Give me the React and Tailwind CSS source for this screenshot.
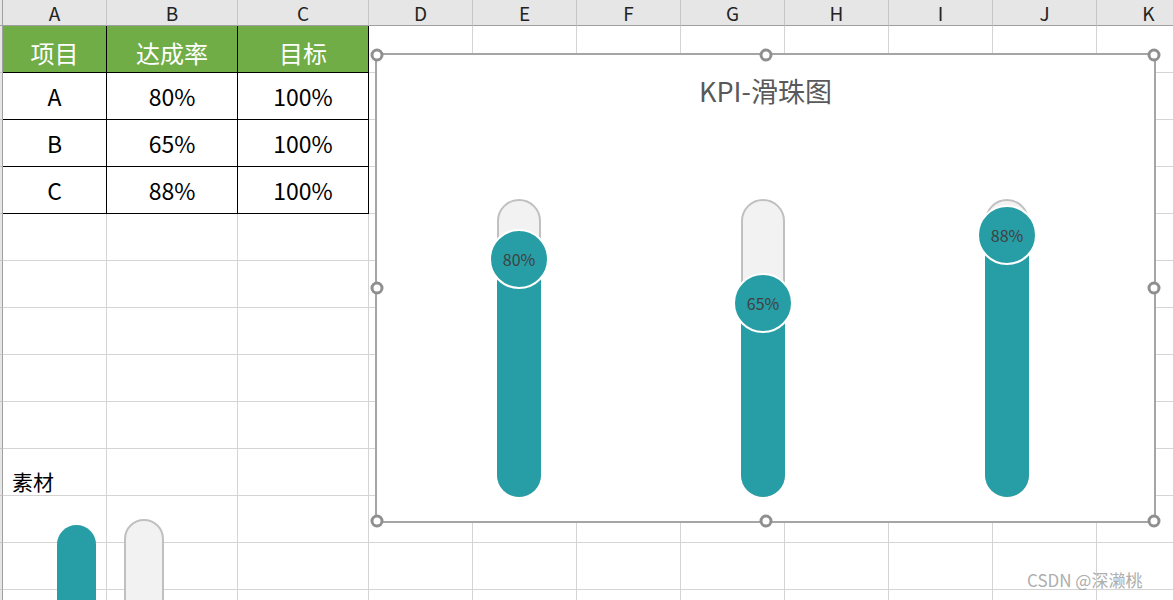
import React from "react"

const letters = ["A", "B", "C", "D", "E", "F", "G", "H", "I", "J", "K"]

const table = [
  ["项目", "达成率", "目标"],
  ["A", "80%", "100%"],
  ["B", "65%", "100%"],
  ["C", "88%", "100%"],
]

const sliders = [
  { label: "80%", value: 0.8 },
  { label: "65%", value: 0.65 },
  { label: "88%", value: 0.88 },
]

const TRACK_H = 298

function Handle({ className }) {
  return (
    <span
      className={
        "absolute w-[13px] h-[13px] rounded-full bg-white border-[3px] border-[#8f8f8f] -translate-x-1/2 -translate-y-1/2 " +
        className
      }
    />
  )
}

function Slider({ label, value }) {
  const fillH = value * TRACK_H
  return (
    <div className="w-[244px] flex justify-center">
      <div className="relative w-[44px] h-[298px]">
        <div className="absolute inset-0 rounded-full bg-[#f2f2f2] border-2 border-[#c0c0c0]" />
        <div
          className="absolute bottom-0 left-0 w-[44px] bg-[#279ea5] rounded-b-[22px]"
          style={{ height: fillH }}
        />
        <div
          className="absolute left-1/2 -translate-x-1/2 translate-y-1/2 w-[60px] h-[60px] rounded-full bg-[#279ea5] border-2 border-white flex items-center justify-center text-[16px] text-[#404040]"
          style={{ bottom: fillH }}
        >
          {label}
        </div>
      </div>
    </div>
  )
}

function Chart() {
  return (
    <div className="absolute left-[375px] top-[53px] w-[781px] h-[470px] bg-white border-2 border-[#a5a5a5]">
      <div className="h-[144px] pt-[19px] flex justify-center">
        <span className="text-[27px] leading-[34px] text-[#595959]">KPI-滑珠图</span>
      </div>
      <div className="flex pl-[20px]">
        {sliders.map((s) => (
          <Slider key={s.label} {...s} />
        ))}
      </div>
      <Handle className="left-0 top-0" />
      <Handle className="left-1/2 top-0" />
      <Handle className="left-full top-0" />
      <Handle className="left-0 top-1/2" />
      <Handle className="left-full top-1/2" />
      <Handle className="left-0 top-full" />
      <Handle className="left-1/2 top-full" />
      <Handle className="left-full top-full" />
    </div>
  )
}

function BodyCell({ r, c }) {
  const inTable = r < 4 && c < 3
  if (inTable) {
    const head = r === 0
    return (
      <div
        className={
          "h-[47px] flex items-center justify-center border-r border-b border-black " +
          (head ? "bg-[#70ad47] text-white text-[24px] pt-[8px]" : "bg-white text-black text-[23px]")
        }
      >
        {table[r][c]}
      </div>
    )
  }
  if (r === 9 && c === 0) {
    return (
      <div className="h-[47px] border-r border-b border-[#d4d4d4] flex items-end pl-[9px] text-[21px] leading-[28px] text-black whitespace-nowrap">
        素材
      </div>
    )
  }
  return <div className="h-[47px] border-r border-b border-[#d4d4d4]" />
}

export default function App() {
  const rows = Array.from({ length: 13 }, (_, i) => i)
  return (
    <div
      className="relative w-[1173px] h-[600px] overflow-hidden bg-white"
      style={{ fontFamily: '"Noto Sans CJK SC", "Noto Sans", sans-serif' }}
    >
      <div className="grid grid-cols-[3px_104px_131px_131px_repeat(8,104px)]">
        <div className="h-[26px] bg-[#e6e6e6] border-r border-b border-[#a0a0a0]" />
        {letters.map((l) => (
          <div
            key={l}
            className="h-[26px] bg-[#e6e6e6] border-r border-b border-r-[#c6c6c6] border-b-[#a0a0a0] flex items-center justify-center text-[19px] leading-none text-[#222]"
          >
            {l}
          </div>
        ))}
        {rows.map((r) => (
          <React.Fragment key={r}>
            <div className="h-[47px] bg-[#e6e6e6] border-r border-b border-r-[#a0a0a0] border-b-[#c6c6c6]" />
            {letters.map((l, c) => (
              <BodyCell key={l} r={r} c={c} />
            ))}
          </React.Fragment>
        ))}
      </div>

      {/* 素材 shapes */}
      <div className="absolute left-[57px] top-[525px] w-[39px] h-[90px] rounded-t-full bg-[#279ea5]" />
      <div className="absolute left-[124px] top-[519px] w-[40px] h-[100px] rounded-t-full bg-[#f2f2f2] border-2 border-[#c0c0c0]" />

      <Chart />

      <div className="absolute left-[1027px] top-[568px] text-[17px] leading-[24px] text-[#9a9a9a] opacity-80 whitespace-nowrap">
        CSDN @深濑桃
      </div>
    </div>
  )
}
